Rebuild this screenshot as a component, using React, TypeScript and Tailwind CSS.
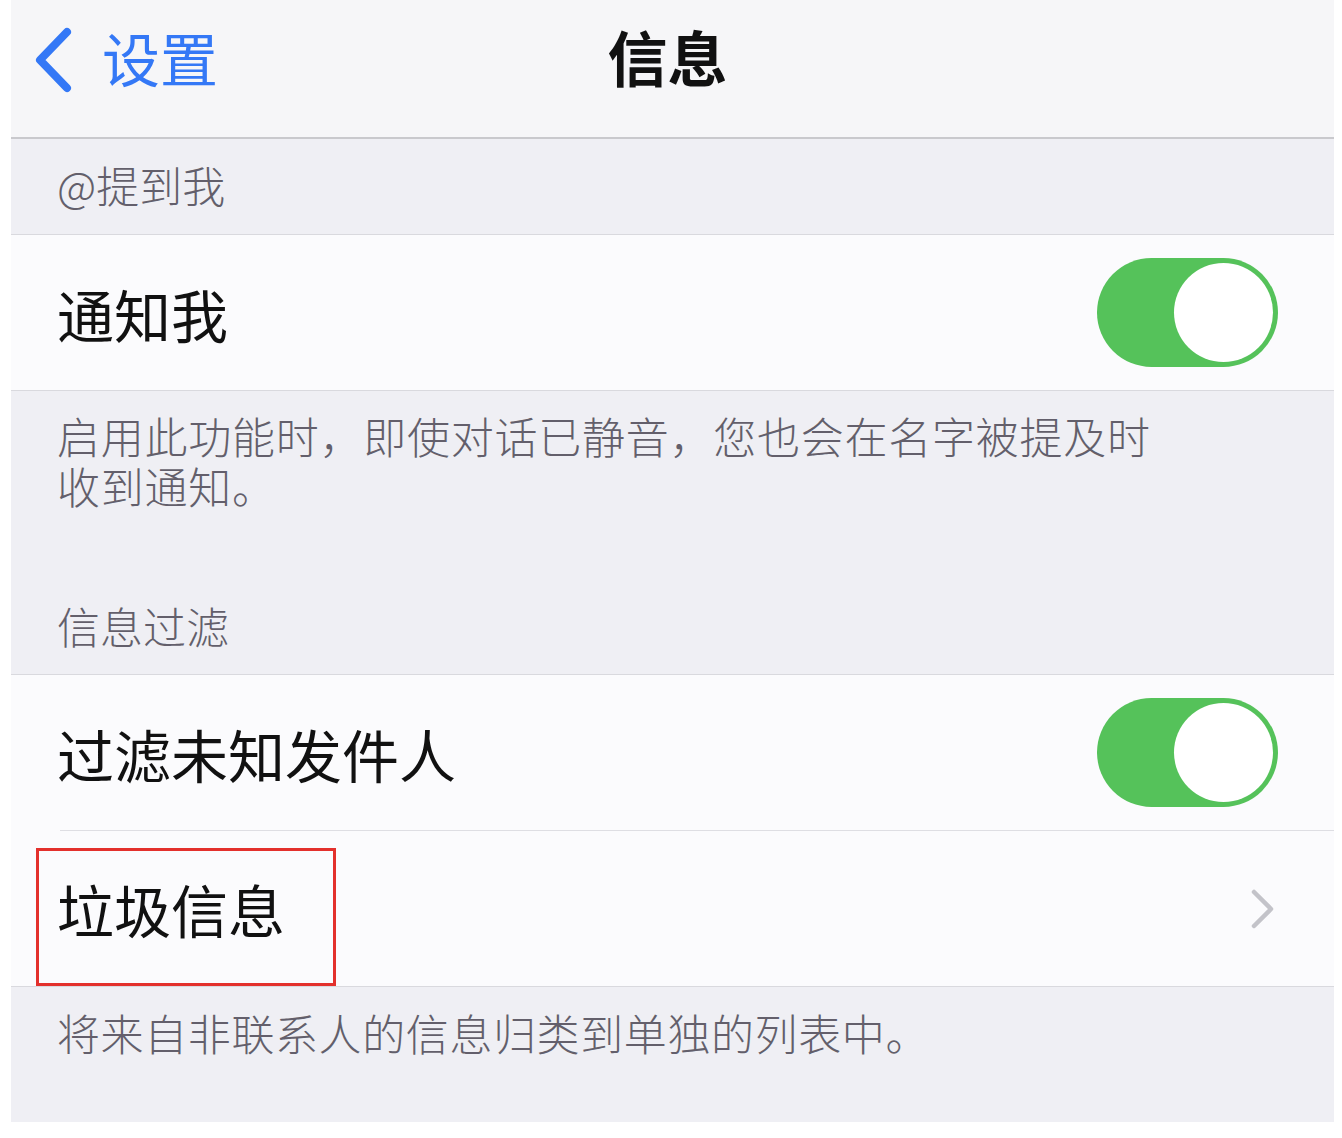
import React from "react";

const font = { fontFamily: '"Noto Sans CJK SC", "Noto Sans", sans-serif' };

function Toggle() {
  return (
    <div className="w-[181px] h-[109px] rounded-full bg-[#55c25a] flex items-center justify-end pr-[5px]">
      <div className="w-[99px] h-[99px] rounded-full bg-white" />
    </div>
  );
}

export default function App() {
  return (
    <div className="w-[1342px] h-[1138px] bg-white pl-[11px] pr-[8px] pb-[16px]" style={font}>
      <div className="flex flex-col h-full">
        {/* Nav bar */}
        <div className="h-[139px] bg-[#f6f6f8] grid grid-cols-3 border-b-2 border-[#c9c9cd] shrink-0">
          <div className="flex items-start pt-[27px] pl-[22px] gap-[29px]">
            <svg width="40" height="66" viewBox="0 0 40 66">
              <path d="M34 5 L7 33 L34 61" fill="none" stroke="#3478f6" strokeWidth="8" strokeLinecap="round" strokeLinejoin="round" />
            </svg>
            <span className="text-[58px] leading-none text-[#3478f6] mt-[1px]">设置</span>
          </div>
          <div className="flex justify-center pt-[26px] pr-[10px]">
            <span className="text-[60px] leading-none font-bold text-[#111]">信息</span>
          </div>
          <div />
        </div>

        {/* Header */}
        <div className="h-[96px] bg-[#efeff4] border-b border-[#d9d9de] flex items-center pl-[46px] pb-[5px] shrink-0">
          <span className="text-[43px] leading-none text-[#635f6b] font-light">@提到我</span>
        </div>

        {/* Row 1 */}
        <div className="h-[156px] bg-[#fbfbfd] border-b border-[#d9d9de] flex items-center justify-between pl-[46px] pr-[56px] shrink-0">
          <span className="text-[57px] leading-none text-[#111] mt-[1px]">通知我</span>
          <Toggle />
        </div>

        {/* Footer + header */}
        <div className="h-[284px] bg-[#efeff4] border-b border-[#d9d9de] flex flex-col justify-between pl-[46px] pt-[19px] pb-[24px] shrink-0">
          <div className="text-[43px] text-[#635f6b] font-light tracking-[0.75px]">
            <div className="h-[50px] leading-[50px]">启用此功能时，即使对话已静音，您也会在名字被提及时</div>
            <div className="h-[50px] leading-[50px]">收到通知。</div>
          </div>
          <span className="text-[43px] leading-[50px] text-[#635f6b] font-light">信息过滤</span>
        </div>

        {/* Row 2 */}
        <div className="h-[155px] bg-[#fbfbfd] flex items-center justify-between pl-[46px] pr-[56px] shrink-0">
          <span className="text-[57px] leading-none text-[#111] mt-[1px]">过滤未知发件人</span>
          <Toggle />
        </div>
        <div className="bg-[#fbfbfd] pl-[49px] shrink-0">
          <div className="h-px bg-[#dedee3]" />
        </div>

        {/* Row 3 */}
        <div className="relative h-[156px] bg-[#fbfbfd] border-b border-[#d9d9de] flex items-center justify-between pl-[46px] pr-[58px] shrink-0">
          <span className="text-[57px] leading-none text-[#111]">垃圾信息</span>
          <svg width="26" height="40" viewBox="0 0 26 40">
            <path d="M4 3 L21 20 L4 37" fill="none" stroke="#c3c3c9" strokeWidth="4.5" strokeLinecap="round" strokeLinejoin="round" />
          </svg>
          <div className="absolute left-[25px] top-[17px] w-[300px] h-[138px] border-[3px] border-[#e3302c]" />
        </div>

        {/* Footer */}
        <div className="flex-1 bg-[#efeff4] pl-[46px] pt-[20px]">
          <p className="text-[43px] leading-[50px] text-[#635f6b] font-light tracking-[0.6px]">
            将来自非联系人的信息归类到单独的列表中。
          </p>
        </div>
      </div>
    </div>
  );
}
